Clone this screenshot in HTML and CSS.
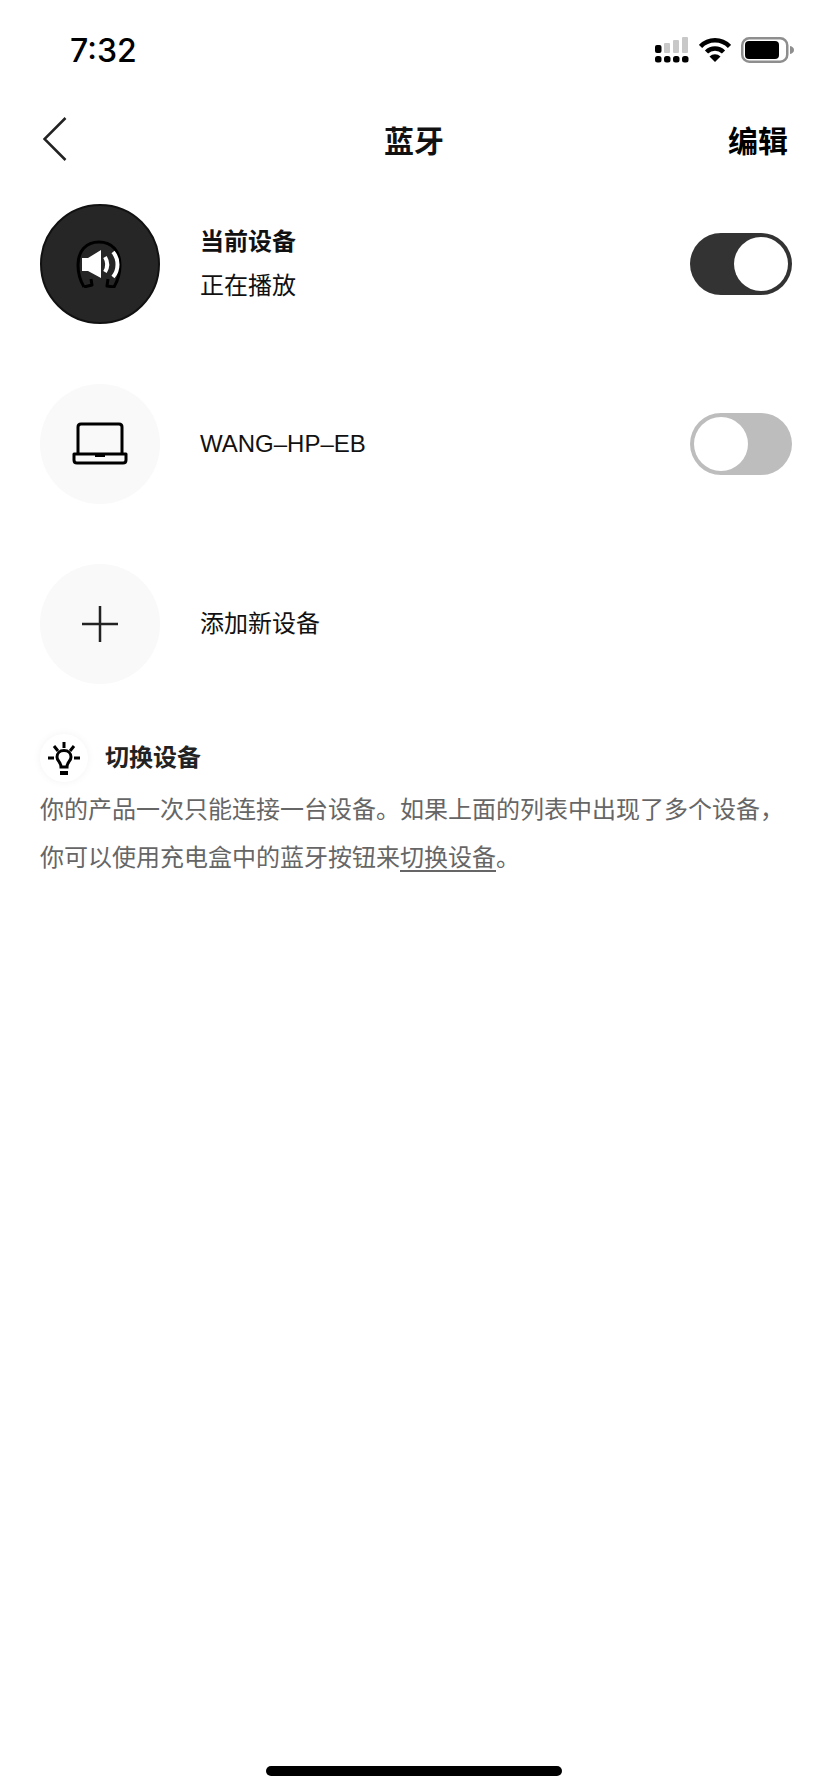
FILE: index.html
```html
<!DOCTYPE html>
<html lang="zh-CN">

<head>
    <meta charset="UTF-8">
    <meta name="viewport" content="width=device-width, initial-scale=1.0">
    <title>蓝牙</title>
    <link rel="stylesheet" href="styles.css">
</head>

<body>
    <div class="page">
        <div class="status-bar">
            <span class="time">7:32</span>
            <div class="status-icons">
                <svg width="34" height="26" viewBox="0 0 34 26">
                    <rect x="0" y="8" width="6.500" height="8" rx="2" fill="#000" />
                    <rect x="9" y="6" width="6" height="10" rx="1" fill="#c8c8c8" />
                    <rect x="18" y="3" width="6" height="13" rx="1" fill="#c8c8c8" />
                    <rect x="27" y="0" width="6" height="16" rx="1" fill="#c8c8c8" />
                    <rect x="0" y="19" width="6.500" height="6.500" rx="2.500" fill="#000" />
                    <rect x="9" y="19" width="6.500" height="6.500" rx="2.500" fill="#000" />
                    <rect x="18" y="19" width="6.500" height="6.500" rx="2.500" fill="#000" />
                    <rect x="27" y="19" width="6.500" height="6.500" rx="2.500" fill="#000" />
                </svg>
                <svg width="32" height="24" viewBox="0 0 32 24">
                    <path d="M1.500 8.500A20 20 0 0 1 30.500 8.500" fill="none" stroke="#000" stroke-width="4.500" />
                    <path d="M7.500 14A12 12 0 0 1 24.500 14" fill="none" stroke="#000" stroke-width="4.500" />
                    <path d="M10.500 18.500A8 8 0 0 1 21.500 18.500L16 24Z" fill="#000" />
                </svg>
                <svg width="54" height="26" viewBox="0 0 54 26">
                    <rect x="1.250" y="1.250" width="45" height="23.500" rx="7" fill="#fff" stroke="#8e8e8e" stroke-width="2.500" />
                    <rect x="4" y="4" width="34" height="18" rx="4" fill="#000" />
                    <path d="M49 9C51.500 9.500 53 11 53 13C53 15 51.500 16.500 49 17Z" fill="#8e8e8e" />
                </svg>
            </div>
        </div>

        <div class="nav-bar">
            <svg class="back" width="24" height="44" viewBox="0 0 24 44">
                <path d="M22.500 1L1.500 22L22.500 43" fill="none" stroke="#222" stroke-width="2.500" />
            </svg>
            <h1 class="nav-title">蓝牙</h1>
            <span class="nav-edit">编辑</span>
        </div>

        <ul class="device-list">
            <li class="device">
                <div class="device-icon device-icon-on">
                    <svg width="48" height="48" viewBox="0 0 48 48">
                        <path d="M8 47C5 42 2 36 2 25C2 11 10 2 23 2C36 2 44 11 44 25C44 36 41 42 38 47L31 46L32 39M8 47L16 45L15 39"
                            fill="none" stroke="#000" stroke-width="3" stroke-linejoin="round" />
                        <path d="M6 18H12L25 10V38L12 31H6Z" fill="#fff" />
                        <path d="M29 17C32 22 32 27 29 32" fill="none" stroke="#fff" stroke-width="4" />
                        <path d="M37 12C43 19 43 30 37 37" fill="none" stroke="#fff" stroke-width="4" />
                    </svg>
                </div>
                <div class="device-text">
                    <span class="device-name device-name-bold">当前设备</span>
                    <span class="device-name">正在播放</span>
                </div>
                <div class="switch switch-on"><span class="knob"></span></div>
            </li>
            <li class="device">
                <div class="device-icon">
                    <svg width="56" height="44" viewBox="0 0 56 44">
                        <path d="M6 32V5C6 3 7 2 9 2H47C49 2 50 3 50 5V32" fill="none" stroke="#000" stroke-width="3" />
                        <path d="M2 32H54V38C54 40 53 41 51 41H5C3 41 2 40 2 38Z" fill="none" stroke="#000" stroke-width="3" stroke-linejoin="round" />
                        <rect x="23" y="32" width="10" height="3" fill="#000" />
                    </svg>
                </div>
                <div class="device-text">
                    <span class="device-name device-name-latin">WANG–HP–EB</span>
                </div>
                <div class="switch"><span class="knob"></span></div>
            </li>
            <li class="device">
                <div class="device-icon">
                    <svg width="36" height="36" viewBox="0 0 36 36">
                        <path d="M18 0V36M0 18H36" fill="none" stroke="#222" stroke-width="2.500" />
                    </svg>
                </div>
                <div class="device-text">
                    <span class="device-name">添加新设备</span>
                </div>
            </li>
        </ul>

        <section class="tip">
            <div class="tip-head">
                <div class="tip-icon">
                    <svg width="32" height="34" viewBox="0 0 32 34">
                        <path d="M16 9.500C11.500 9.500 9 12.500 9 16C9 20 13 21 13 26H19C19 21 23 20 23 16C23 12.500 20.500 9.500 16 9.500Z" fill="none" stroke="#000" stroke-width="3" />
                        <rect x="12" y="30" width="8" height="4" fill="#000" />
                        <path d="M16 1V7M6 5L10 10M26 5L22 10M0 17H6M26 17H32" stroke="#000" stroke-width="3" />
                    </svg>
                </div>
                <h2 class="tip-title">切换设备</h2>
            </div>
            <p class="tip-body">你的产品一次只能连接一台设备。如果上面的列表中出现了多个设备，你可以使用充电盒中的蓝牙按钮来<u>切换设备</u>。</p>
        </section>

        <div class="home-bar"><span class="home-indicator"></span></div>
    </div>
</body>

</html>
```

FILE: styles.css
```css
* {
    box-sizing: border-box;
}

body {
    font-family: "Noto Sans CJK SC", "Liberation Sans", sans-serif;
    background-color: #fff;
    margin: 0;
    padding: 0;
    color: #111;
}

.page {
    width: 828px;
    height: 1792px;
    display: flex;
    flex-direction: column;
}

.status-bar {
    height: 100px;
    padding: 0 33px 0 70px;
    display: flex;
    justify-content: space-between;
    align-items: center;
}

.time {
    font-family: Inter, sans-serif;
    font-size: 32px;
    font-weight: 500;
    color: #000;
}

.status-icons {
    display: flex;
    align-items: center;
    gap: 10px;
}

.nav-bar {
    height: 78px;
    padding: 0 40px 0 43px;
    display: flex;
    justify-content: space-between;
    align-items: center;
    position: relative;
}

.nav-title {
    position: absolute;
    left: 0;
    right: 0;
    margin: 0;
    text-align: center;
    font-size: 30px;
    font-weight: 700;
}

.nav-edit {
    font-size: 30px;
    font-weight: 700;
    color: #000;
}

.device-list {
    list-style: none;
    margin: 26px 0 0;
    padding: 0 36px 0 40px;
    display: flex;
    flex-direction: column;
    gap: 60px;
}

.device {
    height: 120px;
    display: flex;
    align-items: center;
}

.device-icon {
    width: 120px;
    height: 120px;
    border-radius: 50%;
    background-color: #f9f9f9;
    display: flex;
    justify-content: center;
    align-items: center;
    flex-shrink: 0;
}

.device-icon-on {
    background-color: #262626;
    border: 2px solid #111;
}

.device-text {
    margin-left: 40px;
    padding-bottom: 5px;
    flex: 1;
    display: flex;
    flex-direction: column;
    gap: 8px;
}

.device-name {
    font-size: 24px;
    line-height: 36px;
    color: #111;
}

.device-name-bold {
    font-weight: 700;
}

.device-name-latin {
    font-family: "Liberation Sans", sans-serif;
    margin-top: 5px;
}

.switch {
    width: 102px;
    height: 62px;
    border-radius: 31px;
    background-color: #bdbdbd;
    padding: 4px;
    display: flex;
    justify-content: flex-start;
}

.switch-on {
    background-color: #333;
    justify-content: flex-end;
}

.knob {
    width: 54px;
    height: 54px;
    border-radius: 50%;
    background-color: #fff;
}

.tip {
    margin-top: 50px;
    padding: 0 40px;
}

.tip-head {
    display: flex;
    align-items: center;
    gap: 17px;
}

.tip-icon {
    width: 48px;
    height: 48px;
    border-radius: 50%;
    background-color: #fff;
    box-shadow: 0px 0px 8px rgba(0, 0, 0, 0.05);
    display: flex;
    justify-content: center;
    align-items: center;
}

.tip-title {
    margin: 0 0 6px;
    font-size: 24px;
    font-weight: 700;
    color: #222;
}

.tip-body {
    margin: 2px 0 0;
    font-size: 24px;
    line-height: 48px;
    color: #666;
}

.tip-body u {
    text-underline-offset: 4px;
}

.home-bar {
    margin-top: auto;
    height: 26px;
    display: flex;
    justify-content: center;
}

.home-indicator {
    width: 296px;
    height: 10px;
    border-radius: 5px;
    background-color: #000;
}
```
